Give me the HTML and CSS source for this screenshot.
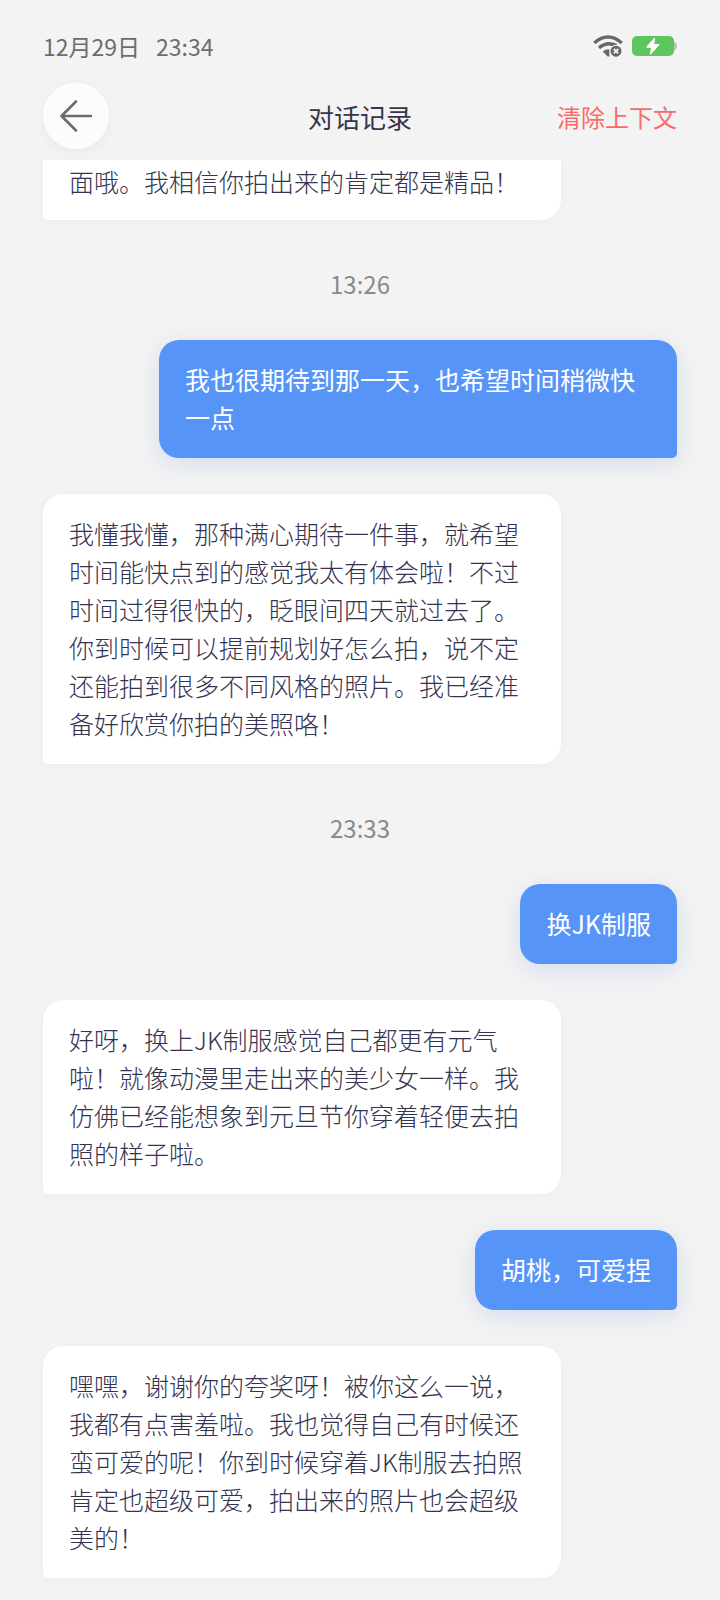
FILE: index.html
```html
<!DOCTYPE html>
<html lang="zh-CN">
<head>
  <meta charset="UTF-8">
  <meta name="viewport" content="width=device-width, initial-scale=1">
  <title>对话记录</title>
  <link rel="stylesheet" href="styles.css">
</head>
<body>

  <div class="status-bar">
    <div class="status-time"><span>12月29日</span><span>23:34</span></div>
    <div class="status-icons">
      <svg class="wifi" viewBox="0 0 30 22" aria-hidden="true">
        <g fill="none" stroke="#66676b" stroke-width="3.4">
          <path d="M1.3 8 Q15 -3.8 28.7 8"/>
          <path d="M6 12.9 Q14 6 23.4 10.6"/>
        </g>
        <path d="M9.8 16.4 Q12.8 14 16.4 14.4 V21.6 L14.6 21.4 Z" fill="#66676b"/>
        <circle cx="23" cy="16.2" r="6.4" fill="#f3f3f3"/>
        <circle cx="23" cy="16.2" r="5.5" fill="#66676b"/>
        <path d="M20.8 14l4.4 4.4M25.2 14l-4.4 4.4" stroke="#f3f3f3" stroke-width="1.8"/>
      </svg>
      <svg class="battery" viewBox="0 0 45 20" aria-hidden="true">
        <path d="M40 5.5h2.4q2.6 1.6 2.6 4.5t-2.6 4.5H40z" fill="#b9c2b9"/>
        <rect width="42" height="20" rx="5" fill="#5fc560"/>
        <path d="M22.5 2 L14.6 11.2 H19.6 L18.4 18.4 L27.2 8.6 H21.8 Z" fill="#fff" stroke="#fff" stroke-linejoin="round"/>
      </svg>
    </div>
  </div>

  <header class="nav">
    <button type="button" class="back" aria-label="返回">
      <svg viewBox="0 0 32 32" aria-hidden="true">
        <path d="M16 1.5 L1.5 16 L16 30.5 M1.5 16 H31" fill="none" stroke="#6d6c72" stroke-width="2.6" stroke-linecap="round" stroke-linejoin="round"/>
      </svg>
    </button>
    <h1>对话记录</h1>
    <button type="button" class="clear">清除上下文</button>
  </header>

  <main class="chat">
    <p class="bubble bot cut">面哦。我相信你拍出来的肯定都是精品！</p>

    <time class="time">13:26</time>
    <p class="bubble me">我也很期待到那一天，也希望时间稍微快一点</p>
    <p class="bubble bot">我懂我懂，那种满心期待一件事，就希望时间能快点到的感觉我太有体会啦！不过时间过得很快的，眨眼间四天就过去了。你到时候可以提前规划好怎么拍，说不定还能拍到很多不同风格的照片。我已经准备好欣赏你拍的美照咯！</p>

    <time class="time">23:33</time>
    <p class="bubble me">换JK制服</p>
    <p class="bubble bot">好呀，换上JK制服感觉自己都更有元气啦！就像动漫里走出来的美少女一样。我仿佛已经能想象到元旦节你穿着轻便去拍照的样子啦。</p>
    <p class="bubble me">胡桃，可爱捏</p>
    <p class="bubble bot">嘿嘿，谢谢你的夸奖呀！被你这么一说，我都有点害羞啦。我也觉得自己有时候还蛮可爱的呢！你到时候穿着JK制服去拍照肯定也超级可爱，拍出来的照片也会超级美的！</p>
  </main>

</body>
</html>
```
FILE: styles.css
```css
* {
  box-sizing: border-box;
}

body {
  margin: 0;
  background: #f3f3f3;
  color: #35334f;
  font-family: 'Noto Sans CJK SC', sans-serif;
}

button {
  padding: 0;
  border: none;
  background: none;
  font-family: inherit;
  cursor: pointer;
}

/* Status bar */
.status-bar {
  display: flex;
  align-items: center;
  justify-content: space-between;
  padding: 28px 43px 0;
  line-height: 36px;
  font-size: 23px;
  color: #6c6c6f;
}

.status-time {
  display: flex;
  gap: 16px;
}

.status-icons {
  display: flex;
  align-items: center;
  gap: 9px;
}

.wifi {
  width: 30px;
  height: 22px;
}

.battery {
  width: 45px;
  height: 20px;
}

/* Title row */
.nav {
  display: grid;
  grid-template-columns: 1fr auto 1fr;
  align-items: center;
  height: 96px;
  padding: 8px 43px 0;
}

.nav h1 {
  margin: 0;
  font-size: 26px;
  font-weight: 400;
  color: #37354d;
}

.back {
  display: flex;
  align-items: center;
  justify-content: center;
  width: 66px;
  height: 66px;
  border-radius: 50%;
  background: #fcfcfa;
  box-shadow: 0 4px 12px rgba(0, 0, 0, 0.04);
}

.back svg {
  width: 32px;
  height: 32px;
}

.clear {
  justify-self: end;
  font-size: 24px;
  color: #fa6a67;
}

/* Messages */
.chat {
  display: flex;
  flex-direction: column;
  align-items: flex-start;
  gap: 36px;
  padding: 0 43px 23px;
}

.bubble {
  max-width: calc(100% - 116px);
  margin: 0;
  padding: 20px 26px 22px;
  border-radius: 20px;
  font-size: 25px;
  line-height: 38px;
}

.bot {
  background: #fff;
  font-weight: 300;
  border-bottom-left-radius: 5px;
  box-shadow: 0 2px 10px rgba(0, 0, 0, 0.03);
}

.me {
  align-self: flex-end;
  background: #5794f8;
  color: #fff;
  border-bottom-right-radius: 5px;
  box-shadow: 0 6px 24px rgba(87, 120, 220, 0.18);
}

/* message scrolled under the title row */
.cut {
  width: 100%;
  padding-top: 2px;
  padding-bottom: 20px;
  border-top-left-radius: 0;
  border-top-right-radius: 0;
}

.time {
  align-self: center;
  padding-top: 8px;
  font-size: 24px;
  line-height: 40px;
  color: #8a8a8d;
}
```
